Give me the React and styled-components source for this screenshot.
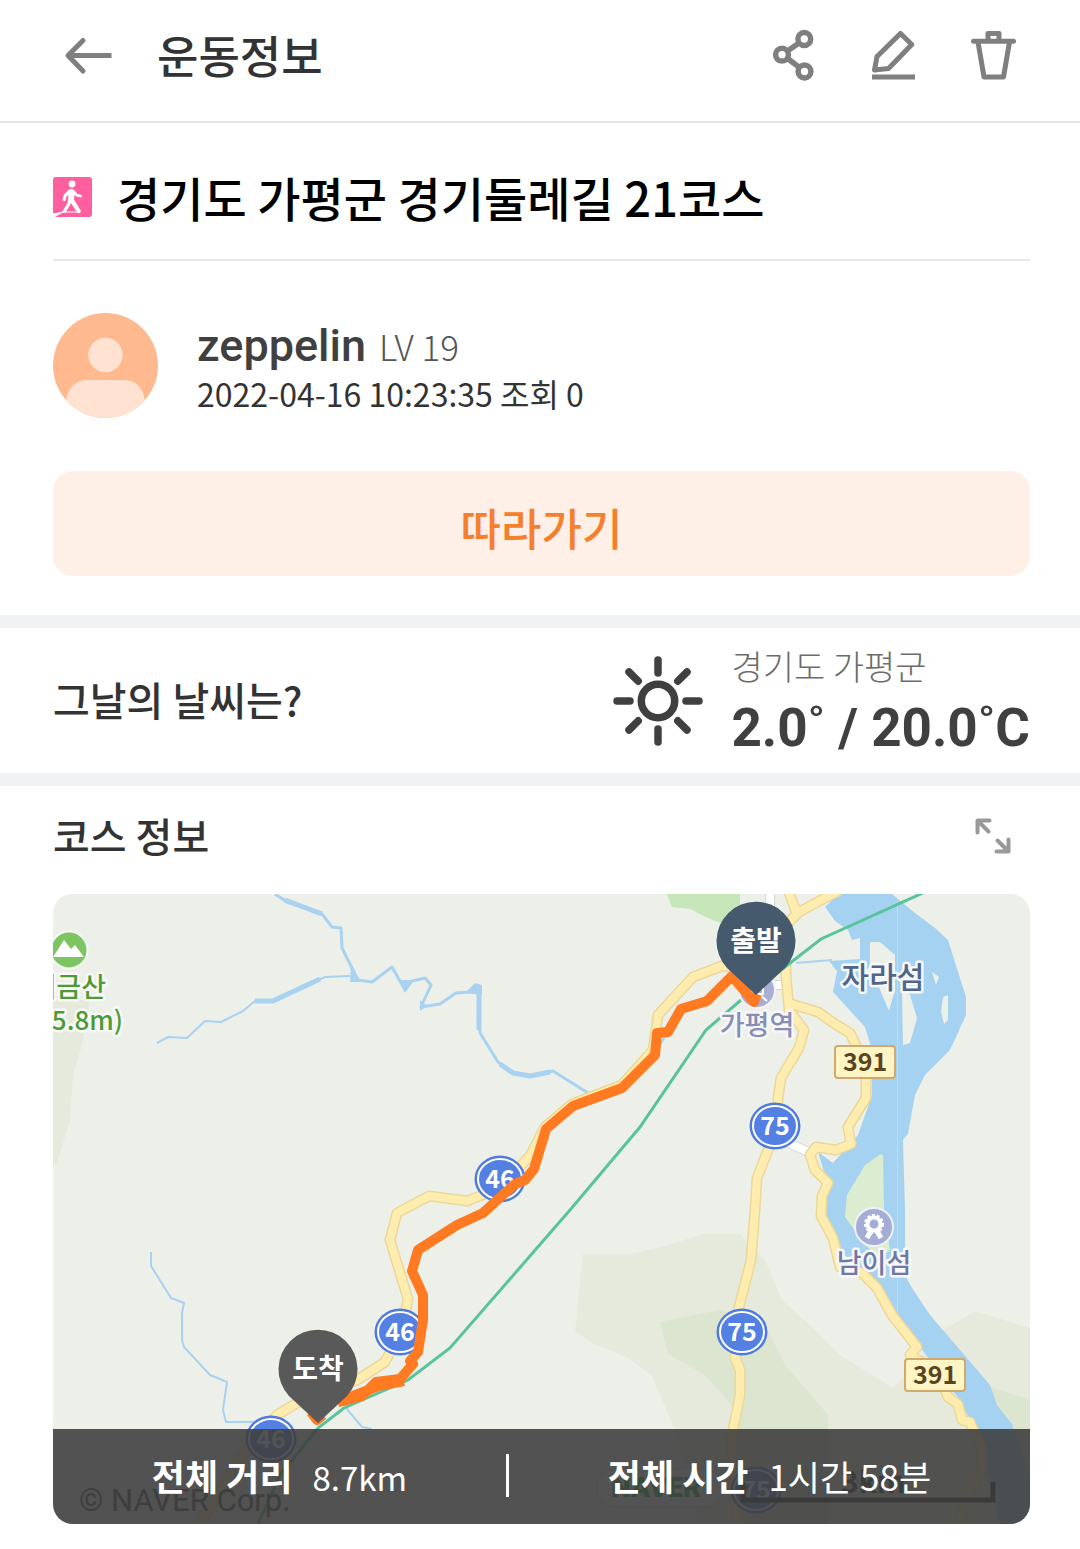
import React from 'react';
import styled, { createGlobalStyle } from 'styled-components';

const GlobalStyle = createGlobalStyle`
  *, *::before, *::after { box-sizing: border-box; }
  body { margin: 0; background: #fff; }
  h1, h2, p, dl, dt, dd { margin: 0; font-weight: inherit; }
`;

const KR = `"Noto Sans CJK KR", sans-serif`;

const Page = styled.div`
  background: #fff;
  color: #404040;
  font-family: ${KR};
  padding-bottom: 25px;
`;

const TopBar = styled.header`
  display: flex;
  align-items: center;
  height: 123px;
  padding: 0 51px 12px 53px;
  border-bottom: 2px solid #e4e4e4;
`;

const IconButton = styled.button`
  display: flex;
  align-items: center;
  justify-content: center;
  width: 72px;
  height: 72px;
  padding: 0;
  border: 0;
  background: none;
  cursor: pointer;
`;

const BarTitle = styled.h1`
  margin-left: 32px;
  font-size: 45px;
  line-height: 60px;
  font-weight: 500;
  color: #333;
`;

const Actions = styled.div`
  display: flex;
  gap: 28px;
  margin-left: auto;
`;

const Intro = styled.section`
  padding: 41px 50px 39px 53px;
`;

const TitleRow = styled.div`
  display: flex;
  align-items: center;
  gap: 24px;
  padding-bottom: 29px;
  border-bottom: 2px solid #e8e8e8;
`;

const CourseTitle = styled.h2`
  font-size: 47px;
  line-height: 66px;
  font-weight: 500;
  color: #000;
`;

const Profile = styled.div`
  display: flex;
  align-items: center;
  gap: 39px;
  padding: 52px 0 53px;
`;

const NameLine = styled.p`
  display: flex;
  align-items: baseline;
  gap: 13px;
  height: 54px;
  line-height: 58px;
`;

const Name = styled.span`
  font-family: Roboto, ${KR};
  font-size: 45px;
  font-weight: 500;
`;

const Level = styled.span`
  font-size: 35px;
  font-weight: 300;
  color: #555;
`;

const Meta = styled.p`
  font-size: 32px;
  line-height: 44px;
  height: 44px;
  color: #333;
`;

const FollowButton = styled.button`
  display: block;
  width: 100%;
  height: 105px;
  padding: 6px 0 0;
  border: 0;
  border-radius: 20px;
  background: #fff0e7;
  color: #f57f2c;
  font-family: ${KR};
  font-size: 44px;
  line-height: 60px;
  font-weight: 500;
  cursor: pointer;
`;

const Weather = styled.section`
  display: flex;
  align-items: center;
  height: 171px;
  padding: 0 50px 0 53px;
  border: solid #f1f2f4;
  border-width: 13px 0;
`;

const SectionTitle = styled.h2`
  margin-right: auto;
  padding-bottom: 3px;
  font-size: 40px;
  line-height: 60px;
  font-weight: 500;
  color: #333;
`;

const Reading = styled.div`
  margin-left: 28px;
  padding-top: 4px;
`;

const Place = styled.p`
  font-size: 34px;
  line-height: 50px;
  font-weight: 300;
  color: #6c6c6c;
`;

const Temperature = styled.p`
  font-family: Roboto, ${KR};
  font-size: 53px;
  line-height: 74px;
  font-weight: 700;
  color: #404040;
`;

const Course = styled.section`
  padding: 14px 50px 0 53px;
`;

const CourseHead = styled.div`
  display: flex;
  align-items: center;
  height: 72px;
  margin-bottom: 22px;
  padding-right: 1px;
`;

const MapCard = styled.div`
  position: relative;
  aspect-ratio: 977 / 630;
  border-radius: 20px;
  overflow: hidden;
  background: #edf0e9;
`;

const MapDrawing = styled.svg`
  display: block;
  width: 100%;
  height: 100%;
  font-family: ${KR};
`;

const Totals = styled.dl`
  position: absolute;
  left: 0;
  right: 0;
  bottom: 0;
  display: flex;
  align-items: center;
  height: 95px;
  padding-bottom: 2px;
  background: rgba(62, 62, 62, 0.89);
  color: #fff;
`;

const Total = styled.div`
  flex: 1 1 auto;
  display: flex;
  align-items: baseline;
  justify-content: center;
  gap: 20px;
  line-height: 42px;
  border-left: ${(p) => (p.$divided ? '3px solid #fff' : '0')};
`;

const TotalLabel = styled.dt`
  font-size: 36px;
  font-weight: 700;
`;

const TotalValue = styled.dd`
  font-size: ${(p) => p.$size}px;
  font-weight: 400;
`;

const BackIcon = () => (
  <svg width="50" height="40" viewBox="64 34 50 40" fill="none" stroke="#7f7f7f" strokeWidth="5" aria-hidden="true">
    <path d="M111.500 54.500H68" />
    <path d="M83 39.500L68 54.500L83 70" strokeLinecap="round" strokeLinejoin="round" />
  </svg>
);

const ShareIcon = () => (
  <svg width="50" height="56" viewBox="768 27 50 56" fill="none" stroke="#7f7f7f" strokeWidth="5.500" aria-hidden="true">
    <circle cx="804.300" cy="39" r="6.400" />
    <circle cx="782" cy="54.700" r="6.400" />
    <circle cx="804.500" cy="71.500" r="6.400" />
    <path d="M799 43L787.500 51M787.500 58.500L799.500 67.500" />
  </svg>
);

const EditIcon = () => (
  <svg width="50" height="56" viewBox="868 27 50 56" fill="none" stroke="#7f7f7f" strokeWidth="5" aria-hidden="true">
    <path d="M900.500 33.500L911.800 44.500L888.500 68.500L874.500 70L877 56.500Z" strokeLinejoin="round" />
    <path d="M872 77H915" />
  </svg>
);

const TrashIcon = () => (
  <svg width="50" height="56" viewBox="968 27 50 56" fill="none" stroke="#7f7f7f" strokeWidth="5" strokeLinejoin="round" aria-hidden="true">
    <path d="M973.500 41.300H1013.500" strokeLinecap="round" />
    <path d="M988 41V33.500H999V41" />
    <path d="M978 42L984 77H1003.500L1009.500 42" />
  </svg>
);

const ExpandIcon = () => (
  <svg width="40" height="40" viewBox="973.500 816.500 40 40" fill="none" stroke="#999" strokeWidth="4" strokeLinecap="round" strokeLinejoin="round" aria-hidden="true">
    <path d="M978 833V821H990M979 822L989 832" />
    <path d="M1009 840V852H997M1008 851L998 841" />
  </svg>
);

const WalkIcon = () => (
  <svg width="40" height="40" viewBox="0 0 40 40" aria-hidden="true">
    <path d="M3 0H36Q39 0 39 3V37Q39 40 36 40H2L9 36H0V3Q0 0 3 0Z" fill="#ff5f9e" />
    <circle cx="19" cy="7" r="3.400" fill="#fff" />
    <path d="M16 12.500Q18.500 11 21 13L24.500 17L28.500 18Q30 19.500 28 20.500L23.500 19.500L21.500 18L21 22.500L28 34Q27.500 37 24.500 36L18 26L13 35Q10.500 37 9 35L14.500 26L15.500 18L13.500 19.500L12.500 23.500Q10 25 9.500 22.500L11 17.500Z" fill="#fff" />
    <path d="M1 37L10 35H26" stroke="#fff" strokeWidth="1" fill="none" />
  </svg>
);

const Avatar = () => (
  <svg width="105" height="105" viewBox="0 0 105 105" role="img" aria-label="zeppelin">
    <clipPath id="avatar-round"><circle cx="52.500" cy="52.500" r="52.500" /></clipPath>
    <g clipPath="url(#avatar-round)">
      <rect width="105" height="105" fill="#ffb98f" />
      <circle cx="52.500" cy="42" r="17.200" fill="#ffe2d1" />
      <path d="M13 92C13 76 22 67 34 67H71C83 67 92 76 92 92V105H13Z" fill="#ffe2d1" />
    </g>
  </svg>
);

const SunIcon = () => (
  <svg width="90" height="90" viewBox="-45 -45 90 90" fill="none" stroke="#404040" strokeWidth="7.500" strokeLinecap="round" aria-hidden="true">
    <circle r="16.700" />
    {[0, 45, 90, 135, 180, 225, 270, 315].map((angle) => (
      <path key={angle} d="M0 -28V-41" transform={`rotate(${angle})`} />
    ))}
  </svg>
);

const RoundBadge = ({ x, y, label }) => (
  <g transform={`translate(${x} ${y})`}>
    <ellipse rx="25.500" ry="23.500" fill="#4f7be0" />
    <ellipse rx="22" ry="20" fill="#5480e4" stroke="#fff" strokeWidth="2" />
    <text y="9" fontSize="25" fontWeight="700" fill="#fff" textAnchor="middle">{label}</text>
  </g>
);

const PlateBadge = ({ x, y, label }) => (
  <g transform={`translate(${x} ${y})`}>
    <rect x="-30" y="-16" width="60" height="32" rx="3" fill="#fff5c4" stroke="#d3a96b" strokeWidth="2" />
    <text y="9" fontSize="25" fontWeight="700" fill="#5b4420" textAnchor="middle">{label}</text>
  </g>
);

const Pin = ({ x, y, label, color }) => (
  <g transform={`translate(${x} ${y})`}>
    <path d="M0 54L-29 27A39.500 39.500 0 1 1 29 27Z" fill={color} />
    <text y="10" fontSize="28" fontWeight="700" fill="#fff" textAnchor="middle">{label}</text>
  </g>
);

const Halo = ({ children, ...rest }) => (
  <text stroke="#f7f8f7" strokeWidth="5" strokeLinejoin="round" paintOrder="stroke" fontWeight="500" {...rest}>
    {children}
  </text>
);

const ROADS = [
  'M786 968L722 966L693 977L658 1015L653 1050L622 1085L572 1104L545 1127L530 1156L500 1188L467 1201L429 1196L397 1213L390 1240L408 1299L402 1330L385 1362L357 1380L320 1393L297 1403L277 1415L240 1458L200 1524',
  'M788 890L797 914L786 925V975L789 1010L804 1030L799 1048L781 1078L778 1098L777 1126L768 1150L757 1178L755 1210L751 1260L739 1307L735 1357L740 1370L740 1395L733 1430L731 1460L738 1524',
  'M840 890L797 913',
  'M788 1003L818 1012L835 1024L850 1033L862 1058L866 1078L866 1098L848 1127L851 1144L836 1150L816 1147L810 1155L815 1170L828 1183L822 1196L821 1216L833 1238L840 1267L862 1273L877 1288L892 1315L917 1347L910 1355L937 1372L948 1397L958 1404L962 1420L970 1422L982 1450V1470L965 1500L960 1524',
];

const CourseMap = () => (
  <MapDrawing viewBox="53 894 977 630" preserveAspectRatio="xMidYMid slice" role="img" aria-label="코스 지도">
    <rect x="53" y="894" width="977" height="630" fill="#edf0e9" />
    <g fill="#e6eadc">
      <path d="M53 1000H90L82 1045L73 1075L70 1120L57 1163L53 1166Z" />
      <path d="M583 1254H630L665 1246L703 1234H740L765 1260L782 1300L815 1330L840 1355L893 1388L905 1375L940 1332L975 1311L1030 1328V1524H700L675 1430L652 1376L628 1358L590 1342L575 1331Z" />
    </g>
    <g fill="#dbe5d0">
      <path d="M660 1322L720 1310L765 1325L785 1365L828 1415V1524H745L730 1440L732 1405L705 1375L668 1354Z" />
      <path d="M985 1385L1030 1400V1500L990 1440Z" />
    </g>
    <path d="M667 894L672 907L690 909L710 919L740 930V894Z" fill="#c5e6b8" />

    <path d="M838 894L825 907L835 921L848 930L852 940L860 938V959L829 961L837 971L833 992L865 1027L872 1050V1095L858 1135L833 1163L818 1152L828 1185L825 1210L840 1250L862 1273L895 1310L920 1347L945 1380L960 1400L975 1430L1000 1524H1030V1475L1012 1424L997 1405L990 1385L930 1315L912 1288L905 1275V1210L903 1140L908 1134L915 1095L925 1075L950 1050L966 1015V997L948 940L935 928L915 913L892 894Z" fill="#a6d2f2" />
    <g fill="#edf0e9">
      <path d="M870 942H880L895 955V990L889 1011L878 985L862 975L870 966Z" />
      <path d="M902 990L910 995L917 1018L910 1043L903 1045Z" />
      <path d="M932 972L939 977L936 985Z" />
      <path d="M943 997L948 995V1020L944 1024L941 1012Z" />
    </g>
    <path d="M881 1154L883 1156L884 1210L890 1250L880 1258L865 1245L845 1217L847 1195L865 1165Z" fill="#dcecd0" />
    <path d="M897.500 900V1330" stroke="#bcdcf2" strokeWidth="1" />

    <g fill="none" stroke="#a9d1f0" strokeLinejoin="round">
      <path d="M275 894L287 902L322 914L332 927L341 928L342 948L358 980L372 982L380 976L392 967L405 990L412 981L425 978L431 985L421 1007L440 1004L456 993L470 992L478 986L480 1033L498 1062L513 1073L530 1076L553 1071L588 1093" strokeWidth="3" />
      <path d="M157 1043L168 1037L187 1038L205 1021L221 1022L243 1011L255 1001L273 1001L325 977L350 976" strokeWidth="2" />
      <path d="M285 900L322 914M255 1001L273 1001L320 979M479 988L479 1030M500 1064L513 1073L530 1076L550 1072" strokeWidth="5" />
      <path d="M151 1252V1266L171 1298L184 1303L182 1313V1340L184 1347L210 1375L227 1382L223 1410L226 1422H255M346 1408L362 1427L372 1429M796 963L832 960M655 1054L680 1010L704 1002" strokeWidth="2" />
    </g>
    <g fill="#a9d1f0">
      <path d="M351 965L360 982H350Z" />
      <path d="M399 980L413 980L405 993Z" />
      <path d="M420 1000L427 1006L420 1011Z" />
      <path d="M465 993L475 983L482 985V995Z" />
    </g>

    <g fill="none" stroke="#d4d7d5" strokeWidth="10"><path d="M770 890V930M740 985H782M786 1142L815 1155" /></g>
    <g fill="none" stroke="#fff" strokeWidth="8"><path d="M770 890V930M740 985H782M786 1142L815 1155" /></g>
    <g fill="none" strokeLinejoin="round">
      {ROADS.map((d) => <path key={d} d={d} stroke="#ecd798" strokeWidth="11" />)}
      {ROADS.map((d) => <path key={`${d}-fill`} d={d} stroke="#ffedb0" strokeWidth="8" />)}
    </g>
    <path d="M925 892L821 939L785 967L741 1000L706 1030L640 1127L570 1210L450 1348L408 1380L344 1408L318 1428L280 1475L258 1524" fill="none" stroke="#58c39d" strokeWidth="3" />

    <RoundBadge x={500} y={1179} label="46" />
    <RoundBadge x={400} y={1332} label="46" />
    <RoundBadge x={271} y={1439} label="46" />
    <RoundBadge x={775} y={1126} label="75" />
    <RoundBadge x={742} y={1332} label="75" />
    <RoundBadge x={756} y={1490} label="75" />
    <PlateBadge x={865} y={1062} label="391" />
    <PlateBadge x={935} y={1375} label="391" />

    <circle cx="69" cy="950" r="18.500" fill="#7dc462" stroke="#f4f8f1" strokeWidth="2" />
    <path d="M53 957L64 940L71 949L75 945L84 957Z" fill="#fff" />
    <Halo x="106" y="997" fontSize="27" textAnchor="end" fill="#4f9a35">귀금산</Halo>
    <Halo x="123" y="1030" fontSize="26" textAnchor="end" fill="#4f9a35">(805.8m)</Halo>
    <Halo x="883" y="988" fontSize="30" textAnchor="middle" fill="#50658b">자라섬</Halo>

    <circle cx="757" cy="990" r="18" fill="#a9afd5" stroke="#f4f4f8" strokeWidth="2" />
    <path d="M752 981H763V994H752ZM754 995L751 1001M760 995L767 1001" fill="none" stroke="#fff" strokeWidth="2" />
    <Halo x="757" y="1035" fontSize="27" textAnchor="middle" fill="#868db6">가평역</Halo>

    <circle cx="874" cy="1227" r="19" fill="#a5acd5" stroke="#f0f2f8" strokeWidth="2" />
    <path d="M871 1231L867 1238M877 1231L881 1238" stroke="#fff" strokeWidth="5" />
    <circle cx="874" cy="1224" r="6.500" fill="none" stroke="#fff" strokeWidth="4" />
    <circle cx="874" cy="1224" r="9" fill="none" stroke="#fff" strokeWidth="2" strokeDasharray="3 2" />
    <Halo x="874" y="1273" fontSize="27" textAnchor="middle" fill="#7078a8">남이섬</Halo>

    <path d="M311 1412L317 1420L323 1415M338 1402L347 1400L362 1396L376 1382L400 1379L413 1364L410 1361L418 1352L423 1320V1295L412 1271L418 1250L457 1225L483 1213L515 1184L525 1180L534 1169L546 1129L573 1106L622 1088L655 1055L657 1033L668 1032L681 1009L707 1001L732 976L754 1002L757 994" fill="none" stroke="#ff7a21" strokeWidth="10" strokeLinejoin="round" />
    <path d="M338 1402L378 1386L404 1381" fill="none" stroke="#ff7a21" strokeWidth="10" />

    <Pin x={756} y={941} label="출발" color="#465a6d" />
    <Pin x={318} y={1369} label="도착" color="#595959" />

    <text x="79" y="1511" fontFamily="Roboto, sans-serif" fontSize="31" fill="#444">© NAVER Corp.</text>
    <rect x="597" y="1469" width="126" height="38" rx="19" fill="#f7f8f5" stroke="#cfd3cc" />
    <text x="611" y="1497" fontFamily="Roboto, sans-serif" fontSize="28" fontWeight="900" fill="#0aa93f">NAVER</text>
    <text x="841" y="1493" fontSize="30" fontWeight="700" fill="#333">3km</text>
    <path d="M743 1482V1500H993V1482" fill="none" stroke="#222" strokeWidth="5" />
  </MapDrawing>
);

export default function App() {
  return (
    <Page>
      <GlobalStyle />
      <TopBar>
        <IconButton type="button" aria-label="뒤로"><BackIcon /></IconButton>
        <BarTitle>운동정보</BarTitle>
        <Actions>
          <IconButton type="button" aria-label="공유"><ShareIcon /></IconButton>
          <IconButton type="button" aria-label="수정"><EditIcon /></IconButton>
          <IconButton type="button" aria-label="삭제"><TrashIcon /></IconButton>
        </Actions>
      </TopBar>

      <main>
        <Intro>
          <TitleRow>
            <WalkIcon />
            <CourseTitle>경기도 가평군 경기둘레길 21코스</CourseTitle>
          </TitleRow>
          <Profile>
            <Avatar />
            <div>
              <NameLine>
                <Name>zeppelin</Name>
                <Level>LV 19</Level>
              </NameLine>
              <Meta>2022-04-16 10:23:35 조회 0</Meta>
            </div>
          </Profile>
          <FollowButton type="button">따라가기</FollowButton>
        </Intro>

        <Weather>
          <SectionTitle>그날의 날씨는?</SectionTitle>
          <SunIcon />
          <Reading>
            <Place>경기도 가평군</Place>
            <Temperature>2.0˚ / 20.0˚C</Temperature>
          </Reading>
        </Weather>

        <Course>
          <CourseHead>
            <SectionTitle>코스 정보</SectionTitle>
            <IconButton type="button" aria-label="지도 크게 보기"><ExpandIcon /></IconButton>
          </CourseHead>
          <MapCard>
            <CourseMap />
            <Totals>
              <Total>
                <TotalLabel>전체 거리</TotalLabel>
                <TotalValue $size={33}>8.7km</TotalValue>
              </Total>
              <Total $divided>
                <TotalLabel>전체 시간</TotalLabel>
                <TotalValue $size={35}>1시간 58분</TotalValue>
              </Total>
            </Totals>
          </MapCard>
        </Course>
      </main>
    </Page>
  );
}
